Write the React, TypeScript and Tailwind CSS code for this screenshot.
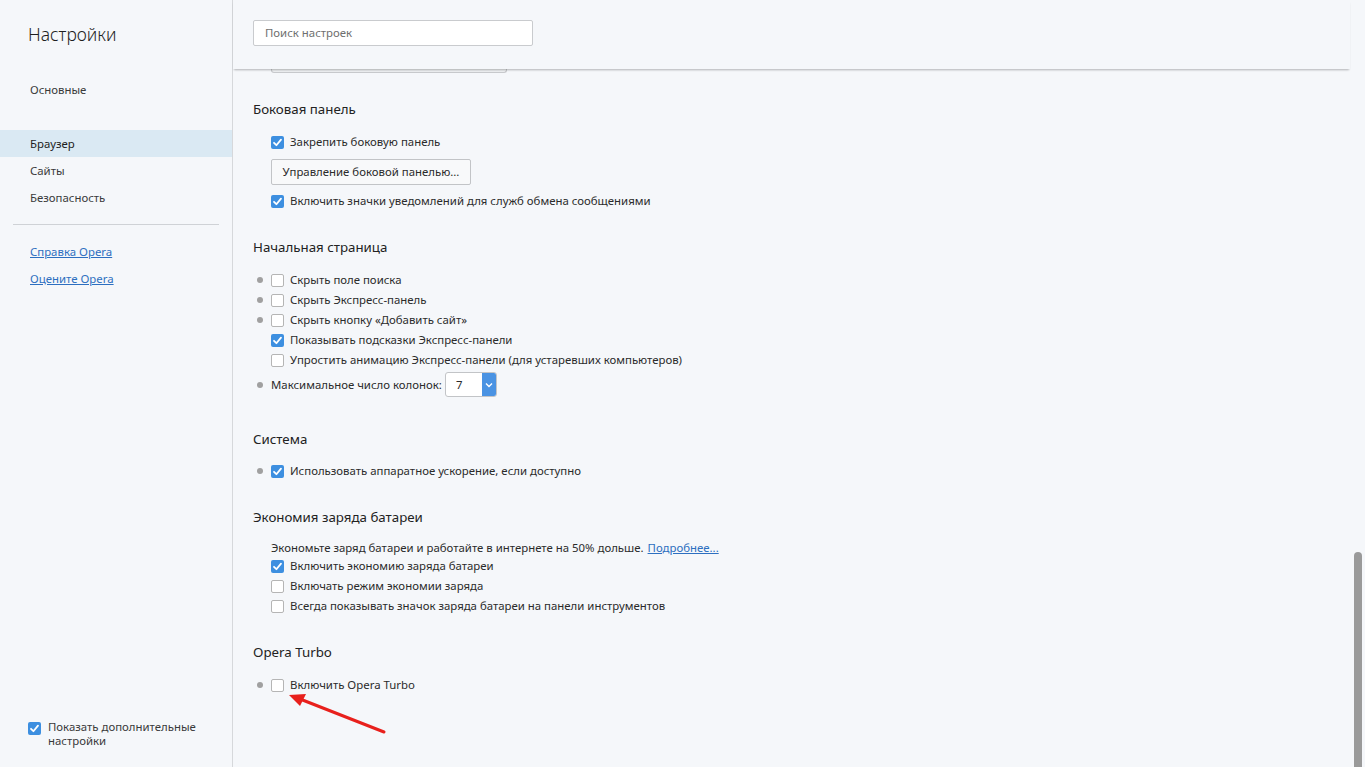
import React from "react";

const font = { fontFamily: '"Noto Sans", "Open Sans", Arial, sans-serif' };

function Box({ checked }: { checked?: boolean }) {
  if (checked) {
    return (
      <span className="flex h-[13px] w-[13px] shrink-0 items-center justify-center rounded-[2px] bg-[#3d8fe0]">
        <svg width="11" height="11" viewBox="0 0 11 11">
          <path d="M2 5.8 L4.4 8.2 L9 2.6" fill="none" stroke="#fff" strokeWidth="1.8" strokeLinecap="round" strokeLinejoin="round" />
        </svg>
      </span>
    );
  }
  return <span className="h-[13px] w-[13px] shrink-0 rounded-[2px] border border-[#b5b5b5] bg-white" />;
}

function Row({ label, checked, dot }: { label: string; checked?: boolean; dot?: boolean }) {
  return (
    <div className="flex h-[20px] items-center">
      <span className="flex w-[18px] justify-start pl-[4px]">
        {dot && <span className="h-[6px] w-[6px] rounded-full bg-[#a0a0a0]" />}
      </span>
      <Box checked={checked} />
      <span className="ml-[6px] whitespace-nowrap text-[11.4px] text-[#2b2b2b]">{label}</span>
    </div>
  );
}

function Heading({ children, mt }: { children: React.ReactNode; mt: string }) {
  return <div className={`flex h-[20px] items-center pt-[2px] text-[13.3px] text-[#222] ${mt}`}>{children}</div>;
}

export default function App() {
  return (
    <div style={font} className="relative flex h-[767px] w-[1365px] overflow-hidden bg-[#f5f7fa]">
      {/* Sidebar */}
      <aside className="flex h-full w-[233px] shrink-0 flex-col border-r border-[#d6d8db] bg-[#f5f7fa]">
        <div className="mt-[22px] flex h-[24px] items-center pl-[28px] text-[17.5px] font-light text-[#1e1e1e]">Настройки</div>
        <nav className="mt-[30px] flex flex-col text-[11.4px] text-[#3a3a3a]">
          <div className="flex h-[27px] items-center pl-[30px]">Основные</div>
          <div className="mt-[27px] flex h-[27px] items-center bg-[#dae9f3] pl-[30px] text-[#1e1e1e]">Браузер</div>
          <div className="flex h-[27px] items-center pl-[30px]">Сайты</div>
          <div className="flex h-[27px] items-center pl-[30px]">Безопасность</div>
        </nav>
        <div className="mx-[13px] mt-[13px] h-px bg-[#cfd2d6]" />
        <div className="mt-[13px] flex flex-col text-[11.4px] text-[#2d6fc0]">
          <a className="flex h-[27px] items-center pl-[30px] underline">Справка Opera</a>
          <a className="flex h-[27px] items-center pl-[30px] underline">Оцените Opera</a>
        </div>
        <div className="mt-auto mb-[19px] flex items-start pl-[28px]">
          <span className="mt-[2px]"><Box checked /></span>
          <span className="ml-[7px] flex flex-col text-[11.4px] text-[#3a3a3a]">
            <span className="block h-[14px] leading-[14px]">Показать дополнительные</span>
            <span className="block h-[14px] leading-[14px]">настройки</span>
          </span>
        </div>
      </aside>

      {/* Main */}
      <main className="relative flex h-full flex-1 flex-col">
        <header className="relative z-10 flex h-[69px] w-[1117px] shrink-0 items-start bg-[#f5f7fa] pl-[20px] pt-[20px] shadow-[0_2px_2px_-1px_rgba(0,0,0,0.28)]">
          <div className="flex h-[26px] w-[280px] items-center rounded-[2px] border border-[#c9cbce] bg-white pl-[11px] text-[11.4px] text-[#6f6f6f]">
            Поиск настроек
          </div>
        </header>
        <div className="ml-[38px] h-[4px] w-[236px] rounded-b-[3px] border-x border-b border-[#c7c9cc] bg-[#eef0f2]" />

        <div className="flex flex-col pl-[20px]">
          <Heading mt="mt-[26px]">Боковая панель</Heading>
          <div className="mt-[13px]">
            <Row label="Закрепить боковую панель" checked />
          </div>
          <div className="ml-[18px] mt-[7px] flex h-[26px] w-[200px] items-center justify-center rounded-[2px] border border-[#c2c4c7] bg-[#f8f9fa] text-[11.4px] text-[#2b2b2b]">
            Управление боковой панелью...
          </div>
          <div className="mt-[6px]">
            <Row label="Включить значки уведомлений для служб обмена сообщениями" checked />
          </div>

          <Heading mt="mt-[26px]">Начальная страница</Heading>
          <div className="mt-[13px] flex flex-col">
            <Row label="Скрыть поле поиска" dot />
            <Row label="Скрыть Экспресс-панель" dot />
            <Row label="Скрыть кнопку «Добавить сайт»" dot />
            <Row label="Показывать подсказки Экспресс-панели" checked />
            <Row label="Упростить анимацию Экспресс-панели (для устаревших компьютеров)" />
          </div>
          <div className="mt-[2px] flex h-[25px] items-center">
            <span className="flex w-[18px] justify-start pl-[4px]">
              <span className="h-[6px] w-[6px] rounded-full bg-[#a0a0a0]" />
            </span>
            <span className="whitespace-nowrap text-[11.4px] text-[#2b2b2b]">Максимальное число колонок:</span>
            <div className="ml-[3px] flex h-[25px] w-[52px] items-stretch overflow-hidden rounded-[3px] border border-[#c2c4c7] bg-white">
              <span className="flex flex-1 items-center pl-[10px] text-[11.4px] text-[#2b2b2b]">7</span>
              <span className="flex w-[14px] items-center justify-center bg-[#4a93e3]">
                <svg width="8" height="6" viewBox="0 0 8 6">
                  <path d="M1 1.5 L4 4.5 L7 1.5" fill="none" stroke="#fff" strokeWidth="1.4" />
                </svg>
              </span>
            </div>
          </div>

          <Heading mt="mt-[32px]">Система</Heading>
          <div className="mt-[12px]">
            <Row label="Использовать аппаратное ускорение, если доступно" checked dot />
          </div>

          <Heading mt="mt-[26px]">Экономия заряда батареи</Heading>
          <div className="mt-[12px] flex h-[17px] items-center pl-[18px] text-[11.4px] text-[#2b2b2b]">
            <span className="whitespace-nowrap">Экономьте заряд батареи и работайте в интернете на 50% дольше.</span>
            <a className="ml-[4px] whitespace-nowrap text-[#2d6fc0] underline">Подробнее...</a>
          </div>
          <div className="flex flex-col">
            <Row label="Включить экономию заряда батареи" checked />
            <Row label="Включать режим экономии заряда" />
            <Row label="Всегда показывать значок заряда батареи на панели инструментов" />
          </div>

          <Heading mt="mt-[26px]">Opera Turbo</Heading>
          <div className="mt-[13px]">
            <Row label="Включить Opera Turbo" dot />
          </div>
        </div>

        {/* scrollbar */}
        <div className="absolute right-[3px] top-[552px] h-[215px] w-[8px] rounded-t-[4px] bg-[#9a9a9a]" />
      </main>

      {/* red arrow annotation */}
      <svg className="pointer-events-none absolute left-0 top-0" width="1365" height="767">
        <line x1="384" y1="732" x2="300" y2="699" stroke="#e8201c" strokeWidth="3" strokeLinecap="round" />
        <path d="M289 695 L306 694 L300 706 Z" fill="#e8201c" />
      </svg>
    </div>
  );
}
